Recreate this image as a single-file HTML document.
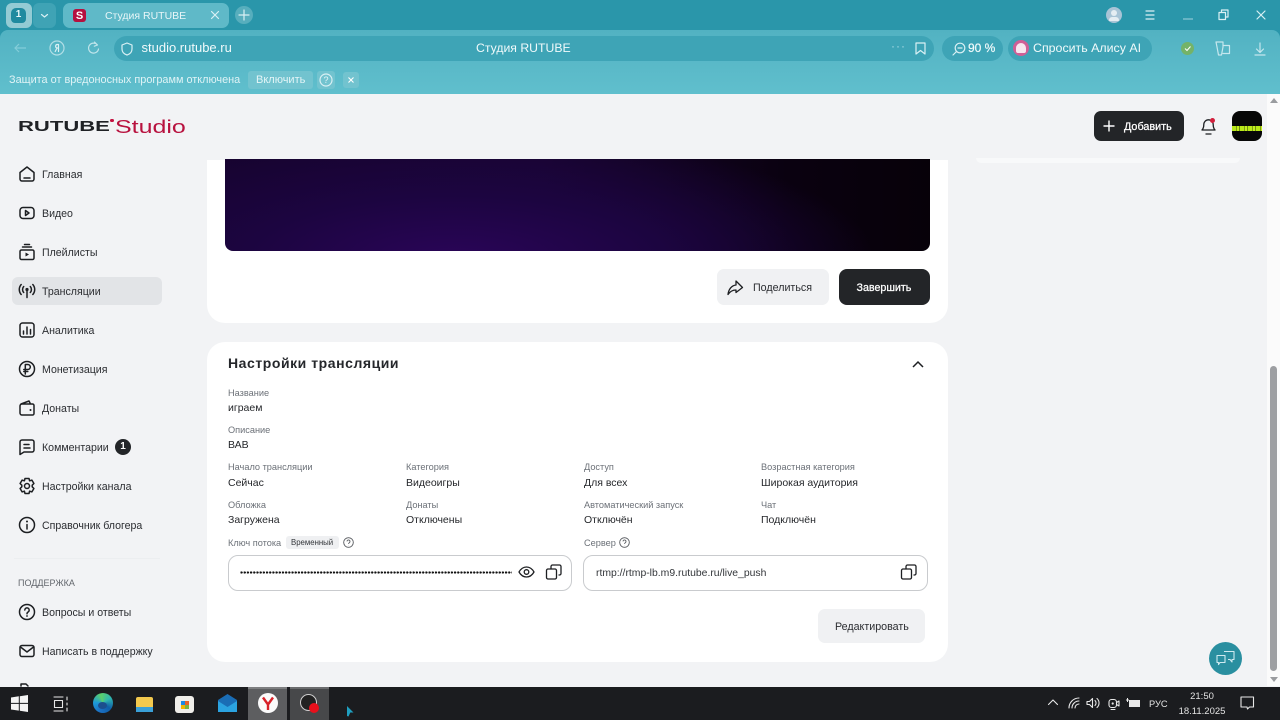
<!DOCTYPE html>
<html lang="ru"><head><meta charset="utf-8"><title>Студия RUTUBE</title>
<style>
html,body{margin:0;padding:0;width:1280px;height:720px;overflow:hidden;background:#f2f3f5;font-family:"Liberation Sans","Noto Sans CJK SC",sans-serif}
.a{position:absolute}
.t{position:absolute;white-space:nowrap;line-height:14px}
svg{position:absolute;overflow:visible}
.nav{font-size:10.6px;color:#2b2d31}
.lb{font-size:9.2px;color:#6c7178}
.v{font-size:10.5px;color:#25272b}
.w{color:#e8f6f8}
.i{fill:none;stroke:#1d1f22;stroke-width:1.5;stroke-linecap:round;stroke-linejoin:round}
.l{fill:none;stroke:#d9f0f4;stroke-width:1.2;stroke-linecap:round;stroke-linejoin:round}
.k{fill:none;stroke:#e8e8e8;stroke-width:1.1;stroke-linecap:round;stroke-linejoin:round}
</style></head><body>

<!-- browser chrome -->
<div class="a" style="left:0;top:0;width:1280px;height:40px;background:#2a96aa"></div>
<div class="a" style="left:0;top:30px;width:1280px;height:64px;background:linear-gradient(#52b2c2,#60bfcd);border-radius:8px 8px 0 0"></div>

<div class="a" style="left:6px;top:3px;width:26px;height:25px;border-radius:6px;background:#93cbd4"></div>
<div class="a" style="left:11px;top:8px;width:15px;height:15px;border-radius:5px 5px 4px 4px;background:#1f8a9f"></div>
<div class="t" style="left:11px;top:8px;width:15px;text-align:center;font-size:10px;font-weight:bold;color:#e6f6f8">1</div>
<div class="a" style="left:33px;top:3px;width:23px;height:25px;border-radius:6px;background:#3fa3b5"></div>
<svg style="left:33px;top:3px" width="23" height="25"><path class="l" d="M8.500 11.500l3 2.500 3-2.500"/></svg>

<div class="a" style="left:63px;top:3px;width:166px;height:25px;border-radius:7px;background:#5fb9c8"></div>
<div class="a" style="left:73px;top:9px;width:13px;height:13px;border-radius:3px;background:#b5103f"></div>
<div class="t" style="left:73px;top:8.500px;width:13px;text-align:center;font-size:11px;font-weight:bold;color:#fff">S</div>
<div class="t w" style="left:105px;top:9px;font-size:10.500px">Студия RUTUBE</div>
<svg style="left:211px;top:11px" width="8" height="8"><path class="l" d="M.5.500l7 7M7.500.500l-7 7"/></svg>
<div class="a" style="left:235px;top:6px;width:18px;height:18px;border-radius:50%;background:#57aebd"></div>
<svg style="left:235px;top:6px" width="18" height="18"><path class="l" d="M9 4v10M4 9h10"/></svg>

<div class="a" style="left:1106px;top:7px;width:16px;height:16px;border-radius:50%;background:#a8c4d6"></div>
<div class="a" style="left:1111px;top:10px;width:6px;height:6px;border-radius:50%;background:#e5edf2"></div>
<div class="a" style="left:1109px;top:17px;width:10px;height:4px;border-radius:4px 4px 1px 1px;background:#e5edf2"></div>
<svg style="left:1145px;top:10px" width="10" height="10"><path class="l" d="M1 1h8M1 5h8M1 9h8"/></svg>
<svg style="left:1182px;top:14px" width="12" height="8"><path d="M1 5h10" stroke="#8ec8d4" stroke-width="1.200"/></svg>
<svg style="left:1218px;top:9px" width="12" height="12"><path class="l" d="M1 3.500h6.500v7H1zM3.500 3.500V1H10v7H7.500"/></svg>
<svg style="left:1256px;top:10px" width="10" height="10"><path class="l" d="M1 1l8 8M9 1l-8 8"/></svg>

<!-- toolbar -->
<svg style="left:13px;top:42px" width="14" height="12"><path d="M13 6H2M6 2L2 6l4 4" fill="none" stroke="#84cdd9" stroke-width="1.200"/></svg>
<svg style="left:49px;top:40px" width="16" height="16"><circle cx="8" cy="8" r="7" class="l" stroke-opacity=".7"/><path class="l" d="M9.500 4.500v7M9.500 8H8L6.200 11.500M9.500 4.500H8a1.800 1.800 0 0 0 0 3.500"/></svg>
<svg style="left:87px;top:41px" width="13" height="14"><path class="l" d="M10.500 4A5 5 0 1 0 11.500 8M7.500 1l3 3-3.200 1.200" stroke-opacity=".8"/></svg>
<div class="a" style="left:114px;top:36px;width:820px;height:25px;border-radius:13px;background:#3ea4b6"></div>
<svg style="left:121px;top:42px" width="12" height="14"><path class="l" d="M6 1l5 2v4c0 3-2 5-5 6-3-1-5-3-5-6V3z"/></svg>
<div class="t" style="left:141.500px;top:41px;font-size:13px;color:#f0fafb">studio.rutube.ru</div>
<div class="t" style="left:476px;top:41px;font-size:12.250px;color:#f0fafb">Студия RUTUBE</div>
<div class="t" style="left:891px;top:39px;font-size:12px;letter-spacing:1px;color:#a8dbe4">···</div>
<svg style="left:915px;top:42px" width="11" height="13"><path class="l" d="M1 1h9v11L5.500 8.500 1 12z"/></svg>
<div class="a" style="left:942px;top:36px;width:61px;height:25px;border-radius:13px;background:#3ea4b6"></div>
<svg style="left:952px;top:42px" width="14" height="14"><circle cx="8" cy="6" r="4.800" class="l"/><path class="l" d="M4.500 9.500L1 13M6 6h4"/></svg>
<div class="t" style="left:968px;top:41px;font-size:12px;color:#f0fafb;-webkit-text-stroke:.2px #f0fafb">90 %</div>
<div class="a" style="left:1008px;top:36px;width:144px;height:25px;border-radius:13px;background:#3ea4b6"></div>
<div class="a" style="left:1013px;top:40px;width:16px;height:16px;border-radius:50%;background:#cf5f96"></div>
<div class="a" style="left:1016px;top:43px;width:10px;height:10px;border-radius:5px 5px 2px 2px;background:#f8e6ef"></div>
<div class="t" style="left:1033px;top:41px;font-size:12.400px;color:#f0fafb">Спросить Алису AI</div>
<div class="a" style="left:1181px;top:42px;width:13px;height:13px;border-radius:50%;background:#74b368"></div>
<svg style="left:1184px;top:45px" width="8" height="7"><path d="M1 3.500l2 2 3.500-4" fill="none" stroke="#fff" stroke-width="1"/></svg>
<svg style="left:1215px;top:41px" width="16" height="15"><path class="l" d="M1 1h7v5l-1.500 8h-3L2 6zM8 4.500h6.500v8H8" stroke-opacity=".85"/></svg>
<svg style="left:1254px;top:42px" width="12" height="14"><path class="l" d="M6 1v9M2.500 7L6 10.500 9.500 7M1 13h10" stroke-opacity=".85"/></svg>

<!-- infobar -->
<div class="t" style="left:9px;top:73px;font-size:10.900px;color:#dff3f6">Защита от вредоносных программ отключена</div>
<div class="a" style="left:248px;top:71px;width:65px;height:18px;border-radius:3px;background:#72c3cf"></div>
<div class="t" style="left:256px;top:73px;font-size:11px;color:#e4f5f7">Включить</div>
<div class="a" style="left:317px;top:71px;width:18px;height:18px;border-radius:3px;background:#72c3cf"></div>
<svg style="left:319px;top:73px" width="14" height="14"><circle cx="7" cy="7" r="6" class="l"/></svg>
<div class="t" style="left:317px;top:73px;width:18px;text-align:center;font-size:9px;color:#e4f5f7">?</div>
<div class="a" style="left:343px;top:72px;width:16px;height:16px;border-radius:3px;background:#72c3cf"></div>
<svg style="left:348px;top:77px" width="6" height="6"><path d="M.5.500l5 5M5.500.500l-5 5" stroke="#fff" stroke-width="1.100"/></svg>

<!-- page -->
<div class="a" style="left:0;top:94px;width:1280px;height:592px;background:#f2f3f5"></div>

<!-- scrollbar -->
<div class="a" style="left:1267px;top:94px;width:13px;height:592px;background:#fbfbfb"></div>
<div class="a" style="left:1270px;top:366px;width:7px;height:305px;border-radius:4px;background:#9d9fa2"></div>
<svg style="left:1269px;top:97px" width="10" height="7"><path d="M1 6l4-5 4 5z" fill="#9a9c9f"/></svg>
<svg style="left:1269px;top:676px" width="10" height="7"><path d="M1 1l4 5 4-5z" fill="#9a9c9f"/></svg>

<!-- logo -->
<div class="t" style="left:18px;top:118px;line-height:18px;font-size:15px;font-weight:bold;color:#1f2125;transform-origin:0 50%;transform:scaleX(1.470)">RUTUBE</div>
<div class="a" style="left:110px;top:118.500px;width:3.500px;height:3.500px;border-radius:50%;background:#c4103f"></div>
<div class="t" style="left:115px;top:117px;line-height:20px;font-size:18.500px;color:#b8123f;transform-origin:0 50%;transform:scaleX(1.350)">Studio</div>

<!-- header right -->
<div class="a" style="left:1094px;top:111px;width:90px;height:30px;border-radius:7px;background:#232528"></div>
<svg style="left:1102px;top:119px" width="14" height="14"><path d="M7 1.500v11M1.500 7h11" stroke="#fff" stroke-width="1.400" fill="none"/></svg>
<div class="t" style="left:1124px;top:120px;font-size:10.800px;color:#fff;-webkit-text-stroke:.25px #fff">Добавить</div>
<svg style="left:1201px;top:117px" width="15" height="18"><path class="i" style="stroke-width:1.300" d="M1 13c1.300-1.300 1.800-3 1.800-5.500A4.700 4.700 0 0 1 7.500 2.800a4.700 4.700 0 0 1 4.700 4.700c0 2.500.5 4.200 1.800 5.500zM5 17h5"/></svg>
<div class="a" style="left:1210px;top:118px;width:5px;height:5px;border-radius:50%;background:#d21f3c"></div>
<div class="a" style="left:1232px;top:111px;width:30px;height:30px;border-radius:8px;background:#070707;overflow:hidden"><div class="a" style="left:0;top:15px;width:30px;height:5px;background:repeating-linear-gradient(90deg,#b8e81a 0 4px,#7f9f15 4px 5px,#c4f01e 5px 7px,#6f8f12 7px 8px)"></div></div>

<!-- sidebar -->
<div class="a" style="left:12px;top:277px;width:150px;height:28px;border-radius:6px;background:#e2e4e7"></div>

<svg style="left:18px;top:165px" width="18" height="18"><path class="i" d="M2 7.500L9 2l7 5.500V14a2 2 0 0 1-2 2H4a2 2 0 0 1-2-2zM6 13h6"/></svg>
<div class="t nav" style="left:42px;top:168px">Главная</div>
<svg style="left:18px;top:204px" width="18" height="18"><rect class="i" x="2" y="3.500" width="14" height="11" rx="3"/><path class="i" d="M7.500 6.500l3.500 2.500-3.500 2.500z"/></svg>
<div class="t nav" style="left:42px;top:207px">Видео</div>
<svg style="left:18px;top:243px" width="18" height="18"><rect class="i" x="2" y="7" width="14" height="9.500" rx="1.500"/><path class="i" d="M4.500 4h9M6.500 1.500h5"/><path d="M7.500 9.500l3.500 2-3.500 2z" fill="#1d1f22"/></svg>
<div class="t nav" style="left:42px;top:246px">Плейлисты</div>
<svg style="left:18px;top:282px" width="18" height="18"><circle cx="9" cy="7.500" r="1.600" fill="#1d1f22"/><path class="i" d="M9 9v6.500M5.700 4.500a4.500 4.500 0 0 0 0 6M12.300 4.500a4.500 4.500 0 0 1 0 6M3.200 2.500a7.500 7.500 0 0 0 0 10M14.800 2.500a7.500 7.500 0 0 1 0 10"/></svg>
<div class="t nav" style="left:42px;top:285px">Трансляции</div>
<svg style="left:18px;top:321px" width="18" height="18"><rect class="i" x="2" y="2" width="14" height="14" rx="2.500"/><path class="i" d="M5.500 10v3M9 6v7M12.500 8.500V13"/></svg>
<div class="t nav" style="left:42px;top:324px">Аналитика</div>
<svg style="left:18px;top:360px" width="18" height="18"><circle class="i" cx="9" cy="9" r="7.500"/><path class="i" d="M7.300 14V4.500h2.500a2.500 2.500 0 0 1 0 5H5.800M5.800 11.500h4"/></svg>
<div class="t nav" style="left:42px;top:363px">Монетизация</div>
<svg style="left:18px;top:399px" width="18" height="18"><path class="i" d="M2 7a2 2 0 0 1 2-2h10.500a1.500 1.500 0 0 1 1.500 1.500v8a1.500 1.500 0 0 1-1.500 1.500H4a2 2 0 0 1-2-2zM3 5l8-3 1.500 3"/><circle cx="12.500" cy="11" r="1" fill="#1d1f22"/></svg>
<div class="t nav" style="left:42px;top:402px">Донаты</div>
<svg style="left:18px;top:438px" width="18" height="18"><path class="i" d="M2 4a2 2 0 0 1 2-2h10a2 2 0 0 1 2 2v8a2 2 0 0 1-2 2H6l-4 2.500zM6 6.500h5M6 10h6"/></svg>
<div class="t nav" style="left:42px;top:441px">Комментарии</div>
<div class="a" style="left:115px;top:439px;width:16px;height:16px;border-radius:50%;background:#232528"></div>
<div class="t" style="left:115px;top:440px;width:16px;text-align:center;font-size:10px;color:#fff;font-weight:bold">1</div>
<svg style="left:18px;top:477px" width="18" height="18"><path class="i" d="M7 1.500h4l.6 2.300 2.300-.7 2 3.400-1.700 1.700v1.600l1.700 1.700-2 3.400-2.300-.7-.6 2.300H7l-.6-2.300-2.300.7-2-3.400 1.700-1.700V8.200L2.100 6.500l2-3.400 2.300.7z"/><circle class="i" cx="9" cy="9" r="2.500"/></svg>
<div class="t nav" style="left:42px;top:480px">Настройки канала</div>
<svg style="left:18px;top:516px" width="18" height="18"><circle class="i" cx="9" cy="9" r="7.500"/><path class="i" d="M9 8.500v4.500"/><circle cx="9" cy="5.500" r="1" fill="#1d1f22"/></svg>
<div class="t nav" style="left:42px;top:519px">Справочник блогера</div>

<div class="a" style="left:14px;top:558px;width:146px;height:1px;background:#eceef0"></div>
<div class="t" style="left:18px;top:576px;font-size:9px;color:#63676d">ПОДДЕРЖКА</div>
<svg style="left:18px;top:603px" width="18" height="18"><circle class="i" cx="9" cy="9" r="7.500"/><path class="i" d="M6.800 7a2.200 2.200 0 1 1 3.400 1.900C9.400 9.400 9 9.900 9 10.800"/><circle cx="9" cy="13" r=".9" fill="#1d1f22"/></svg>
<div class="t nav" style="left:42px;top:606px">Вопросы и ответы</div>
<svg style="left:18px;top:642px" width="18" height="18"><rect class="i" x="2" y="3.500" width="14" height="11" rx="2"/><path class="i" d="M2.500 5L9 10l6.500-5"/></svg>
<div class="t nav" style="left:42px;top:645px">Написать в поддержку</div>
<svg style="left:20px;top:683px" width="14" height="3"><path class="i" d="M1 3V1h5l2 2"/></svg>

<!-- upper card -->
<div class="a" style="left:207px;top:160px;width:741px;height:163px;background:#fff;border-radius:0 0 18px 18px"></div>
<div class="a" style="left:225px;top:159px;width:705px;height:92px;border-radius:0 0 8px 8px;background:radial-gradient(ellipse 420px 130px at 230px 110%,#2a0558 0%,#1c0540 50%,transparent 100%),linear-gradient(90deg,#16032e 0%,#18042f 45%,#0a0110 80%,#070109 100%)"></div>
<div class="a" style="left:717px;top:269px;width:112px;height:36px;border-radius:7px;background:#f0f1f3"></div>
<svg style="left:727px;top:280px" width="16" height="16"><path class="i" style="stroke-width:1.300" d="M9 1L15.500 7.500 9 12.500V10C5.500 10 3 11.500 1 14.500 1.500 9.500 4.500 5.500 9 5z"/></svg>
<div class="t" style="left:753px;top:281px;font-size:10.700px;color:#2b2d31">Поделиться</div>
<div class="a" style="left:839px;top:269px;width:91px;height:36px;border-radius:8px;background:#232528"></div>
<div class="t" style="left:856.500px;top:281px;font-size:10.700px;color:#fff;-webkit-text-stroke:.25px #fff">Завершить</div>

<!-- right panel remnant -->
<div class="a" style="left:976px;top:158px;width:264px;height:5px;border-radius:0 0 6px 6px;background:#f8f9fa"></div>

<!-- settings card -->
<div class="a" style="left:207px;top:342px;width:741px;height:320px;background:#fff;border-radius:18px"></div>
<div class="t" style="left:228px;top:356px;font-size:14px;font-weight:bold;letter-spacing:.55px;color:#25272b">Настройки трансляции</div>
<svg style="left:912px;top:360px" width="12" height="8"><path d="M1 7l5-5 5 5" fill="none" stroke="#1d1f22" stroke-width="1.500"/></svg>

<div class="t lb" style="left:228px;top:386px">Название</div>
<div class="t v" style="left:228px;top:401px">играем</div>
<div class="t lb" style="left:228px;top:423px">Описание</div>
<div class="t v" style="left:228px;top:438px">ВАВ</div>

<div class="t lb" style="left:228px;top:460px">Начало трансляции</div>
<div class="t v" style="left:228px;top:476px">Сейчас</div>
<div class="t lb" style="left:406px;top:460px">Категория</div>
<div class="t v" style="left:406px;top:476px">Видеоигры</div>
<div class="t lb" style="left:584px;top:460px">Доступ</div>
<div class="t v" style="left:584px;top:476px">Для всех</div>
<div class="t lb" style="left:761px;top:460px">Возрастная категория</div>
<div class="t v" style="left:761px;top:476px">Широкая аудитория</div>

<div class="t lb" style="left:228px;top:498px">Обложка</div>
<div class="t v" style="left:228px;top:513px">Загружена</div>
<div class="t lb" style="left:406px;top:498px">Донаты</div>
<div class="t v" style="left:406px;top:513px">Отключены</div>
<div class="t lb" style="left:584px;top:498px">Автоматический запуск</div>
<div class="t v" style="left:584px;top:513px">Отключён</div>
<div class="t lb" style="left:761px;top:498px">Чат</div>
<div class="t v" style="left:761px;top:513px">Подключён</div>

<div class="t lb" style="left:228px;top:536px">Ключ потока</div>
<div class="a" style="left:286px;top:536px;width:53px;height:13px;border-radius:3px;background:#eff0f2"></div>
<div class="t" style="left:291px;top:536px;font-size:7.800px;color:#33363a">Временный</div>
<svg style="left:343px;top:537px" width="11" height="11"><circle cx="5.500" cy="5.500" r="4.800" fill="none" stroke="#55585d" stroke-width=".9"/><path d="M4 4.400a1.500 1.500 0 1 1 2.300 1.300c-.5.300-.8.600-.8 1.200M5.500 8.300v.1" fill="none" stroke="#55585d" stroke-width=".9"/></svg>
<div class="t lb" style="left:584px;top:536px">Сервер</div>
<svg style="left:618.500px;top:537px" width="11" height="11"><circle cx="5.500" cy="5.500" r="4.800" fill="none" stroke="#55585d" stroke-width=".9"/><path d="M4 4.400a1.500 1.500 0 1 1 2.300 1.300c-.5.300-.8.600-.8 1.200M5.500 8.300v.1" fill="none" stroke="#55585d" stroke-width=".9"/></svg>

<div class="a" style="left:228px;top:555px;width:342px;height:34px;border:1px solid #c9cbce;border-radius:10px"></div>
<div class="a" style="left:240px;top:570.500px;width:272px;height:3px;background:radial-gradient(circle at 1.500px 1.500px,#111 1.050px,transparent 1.300px) 0 0/3.200px 3px repeat-x"></div>
<svg style="left:518px;top:565px" width="17" height="14"><path class="i" style="stroke-width:1.300" d="M1 7c2-3.500 4.500-5 7.500-5S14 3.500 16 7c-2 3.500-4.500 5-7.500 5S3 10.500 1 7z"/><circle class="i" style="stroke-width:1.300" cx="8.500" cy="7" r="2.300"/></svg>
<svg style="left:545px;top:563px" width="18" height="18"><rect class="i" style="stroke-width:1.300" x="1.500" y="6" width="10" height="10" rx="1.500"/><path class="i" style="stroke-width:1.300" d="M6 6V3.500A1.500 1.500 0 0 1 7.500 2h7A1.500 1.500 0 0 1 16 3.500v7a1.500 1.500 0 0 1-1.500 1.500H14"/></svg>

<div class="a" style="left:583px;top:555px;width:343px;height:34px;border:1px solid #c9cbce;border-radius:10px"></div>
<div class="t" style="left:596px;top:567px;font-size:10.400px;color:#33363a">rtmp://rtmp-lb.m9.rutube.ru/live_push</div>
<svg style="left:900px;top:563px" width="18" height="18"><rect class="i" style="stroke-width:1.300" x="1.500" y="6" width="10" height="10" rx="1.500"/><path class="i" style="stroke-width:1.300" d="M6 6V3.500A1.500 1.500 0 0 1 7.500 2h7A1.500 1.500 0 0 1 16 3.500v7a1.500 1.500 0 0 1-1.500 1.500H14"/></svg>

<div class="a" style="left:818px;top:609px;width:107px;height:34px;border-radius:7px;background:#f0f1f3"></div>
<div class="t" style="left:835px;top:620px;font-size:10.700px;color:#2b2d31">Редактировать</div>

<!-- chat fab -->
<div class="a" style="left:1209px;top:642px;width:33px;height:33px;border-radius:50%;background:#2a8fa0"></div>
<svg style="left:1216px;top:650px" width="20" height="17"><path d="M1 5.500h8v7H4l-1.500 2v-2H1zM8 1.500h10v8h-2v2.500l-2-2.500h-2" fill="none" stroke="#cfeaf0" stroke-width="1.100" stroke-linejoin="round"/></svg>

<!-- taskbar -->
<div class="a" style="left:0;top:687px;width:1280px;height:33px;background:#1b1c1f"></div>
<svg style="left:11px;top:695px" width="18" height="17"><path d="M0 2.500L7.800 1.300v6.600H0zM8.800 1.200L17 0v7.900H8.800zM0 8.900h7.800v6.700L0 14.500zM8.800 8.900H17V17l-8.200-1.200z" fill="#f4f4f4"/></svg>
<svg style="left:53px;top:696px" width="16" height="16"><path class="k" d="M1 1h9M1 15h9M1.500 4.500h8v7h-8zM14 1v3M14 7v2M14 12v3"/></svg>
<div class="a" style="left:93px;top:693px;width:20px;height:20px;border-radius:50%;background:conic-gradient(from 200deg,#1b6fc2,#1d9ad8,#5bd06a,#2fb6b0,#0f5fa8,#1b6fc2)"></div>
<div class="a" style="left:98px;top:702px;width:9px;height:7px;border-radius:50%;background:#1c4f8e"></div>
<div class="a" style="left:136px;top:697px;width:17px;height:14px;border-radius:2px;background:#f3c94e"></div>
<div class="a" style="left:136px;top:707px;width:17px;height:5px;background:#3aa0d8"></div>
<div class="a" style="left:175px;top:696px;width:19px;height:17px;border-radius:3px;background:#f0eeea"></div>
<div class="a" style="left:181px;top:701px;width:8px;height:8px;background:conic-gradient(#e8622c 0 25%,#7cb342 0 50%,#f4b400 0 75%,#1e88e5 0)"></div>
<svg style="left:218px;top:694px" width="19" height="18"><path d="M0 6L9.500 0 19 6v12H0z" fill="#1a6db5"/><path d="M0 7l9.500 6L19 7v11H0z" fill="#2ba3e0"/></svg>
<div class="a" style="left:248px;top:687px;width:39px;height:33px;background:#5d5e60;box-shadow:inset 0 2px 0 #7d7e80"></div>
<div class="a" style="left:258px;top:693px;width:20px;height:20px;border-radius:50%;background:#fbfbfb"></div>
<svg style="left:258px;top:693px" width="20" height="20"><path d="M5 4.500l5 7 5-7M10 11v6" fill="none" stroke="#d8232a" stroke-width="2.400"/></svg>
<div class="a" style="left:290px;top:687px;width:39px;height:33px;background:#47484a;box-shadow:inset 0 2px 0 #6a6b6d"></div>
<div class="a" style="left:300px;top:694px;width:17px;height:17px;border-radius:50%;background:#222;border:1px solid #cfcfcf;box-sizing:border-box"></div>
<div class="a" style="left:309px;top:703px;width:10px;height:10px;border-radius:50%;background:#e8101c"></div>
<svg style="left:347px;top:706px" width="7" height="11"><path d="M0 0l6.500 6.500H3.300L1.500 10.500 0 10z" fill="#1f9fc0"/></svg>

<svg style="left:1048px;top:699px" width="10" height="7"><path class="k" d="M.5 5.500L5 1l4.500 4.500"/></svg>
<svg style="left:1068px;top:697px" width="12" height="12"><path class="k" d="M1 11A10 10 0 0 1 11 1M4 11a7 7 0 0 1 7-7M7 11a4 4 0 0 1 4-4"/></svg>
<svg style="left:1086px;top:697px" width="14" height="12"><path class="k" d="M1 4.500h2.500L6.500 1.500v9L3.500 7.500H1zM9 3.500a3.500 3.500 0 0 1 0 5M11 1.500a6 6 0 0 1 0 9"/></svg>
<svg style="left:1108px;top:697px" width="12" height="13"><rect class="k" x="1" y="2.500" width="7.500" height="8" rx="2.500"/><circle cx="4.700" cy="6.500" r="1.100" fill="#e8e8e8"/><path class="k" d="M8.500 5.500l2.500-1.500v5l-2.500-1.500M3 12.500h4"/></svg>
<svg style="left:1126px;top:698px" width="14" height="10"><rect x="3" y="2" width="11" height="7" fill="#e8e8e8"/><path d="M0 2h3M1.500 0v4" stroke="#e8e8e8" stroke-width="1"/></svg>
<div class="t" style="left:1149px;top:697px;font-size:9.300px;color:#e4e4e4">РУС</div>
<div class="t" style="left:1172px;top:690px;width:60px;text-align:center;font-size:9.500px;color:#e4e4e4">21:50</div>
<div class="t" style="left:1172px;top:705px;width:60px;text-align:center;font-size:9.500px;color:#e4e4e4">18.11.2025</div>
<svg style="left:1240px;top:696px" width="15" height="14"><path class="k" d="M1 1h12.500v10H9.500L7.500 13 7 11H1z"/></svg>
</body></html>
